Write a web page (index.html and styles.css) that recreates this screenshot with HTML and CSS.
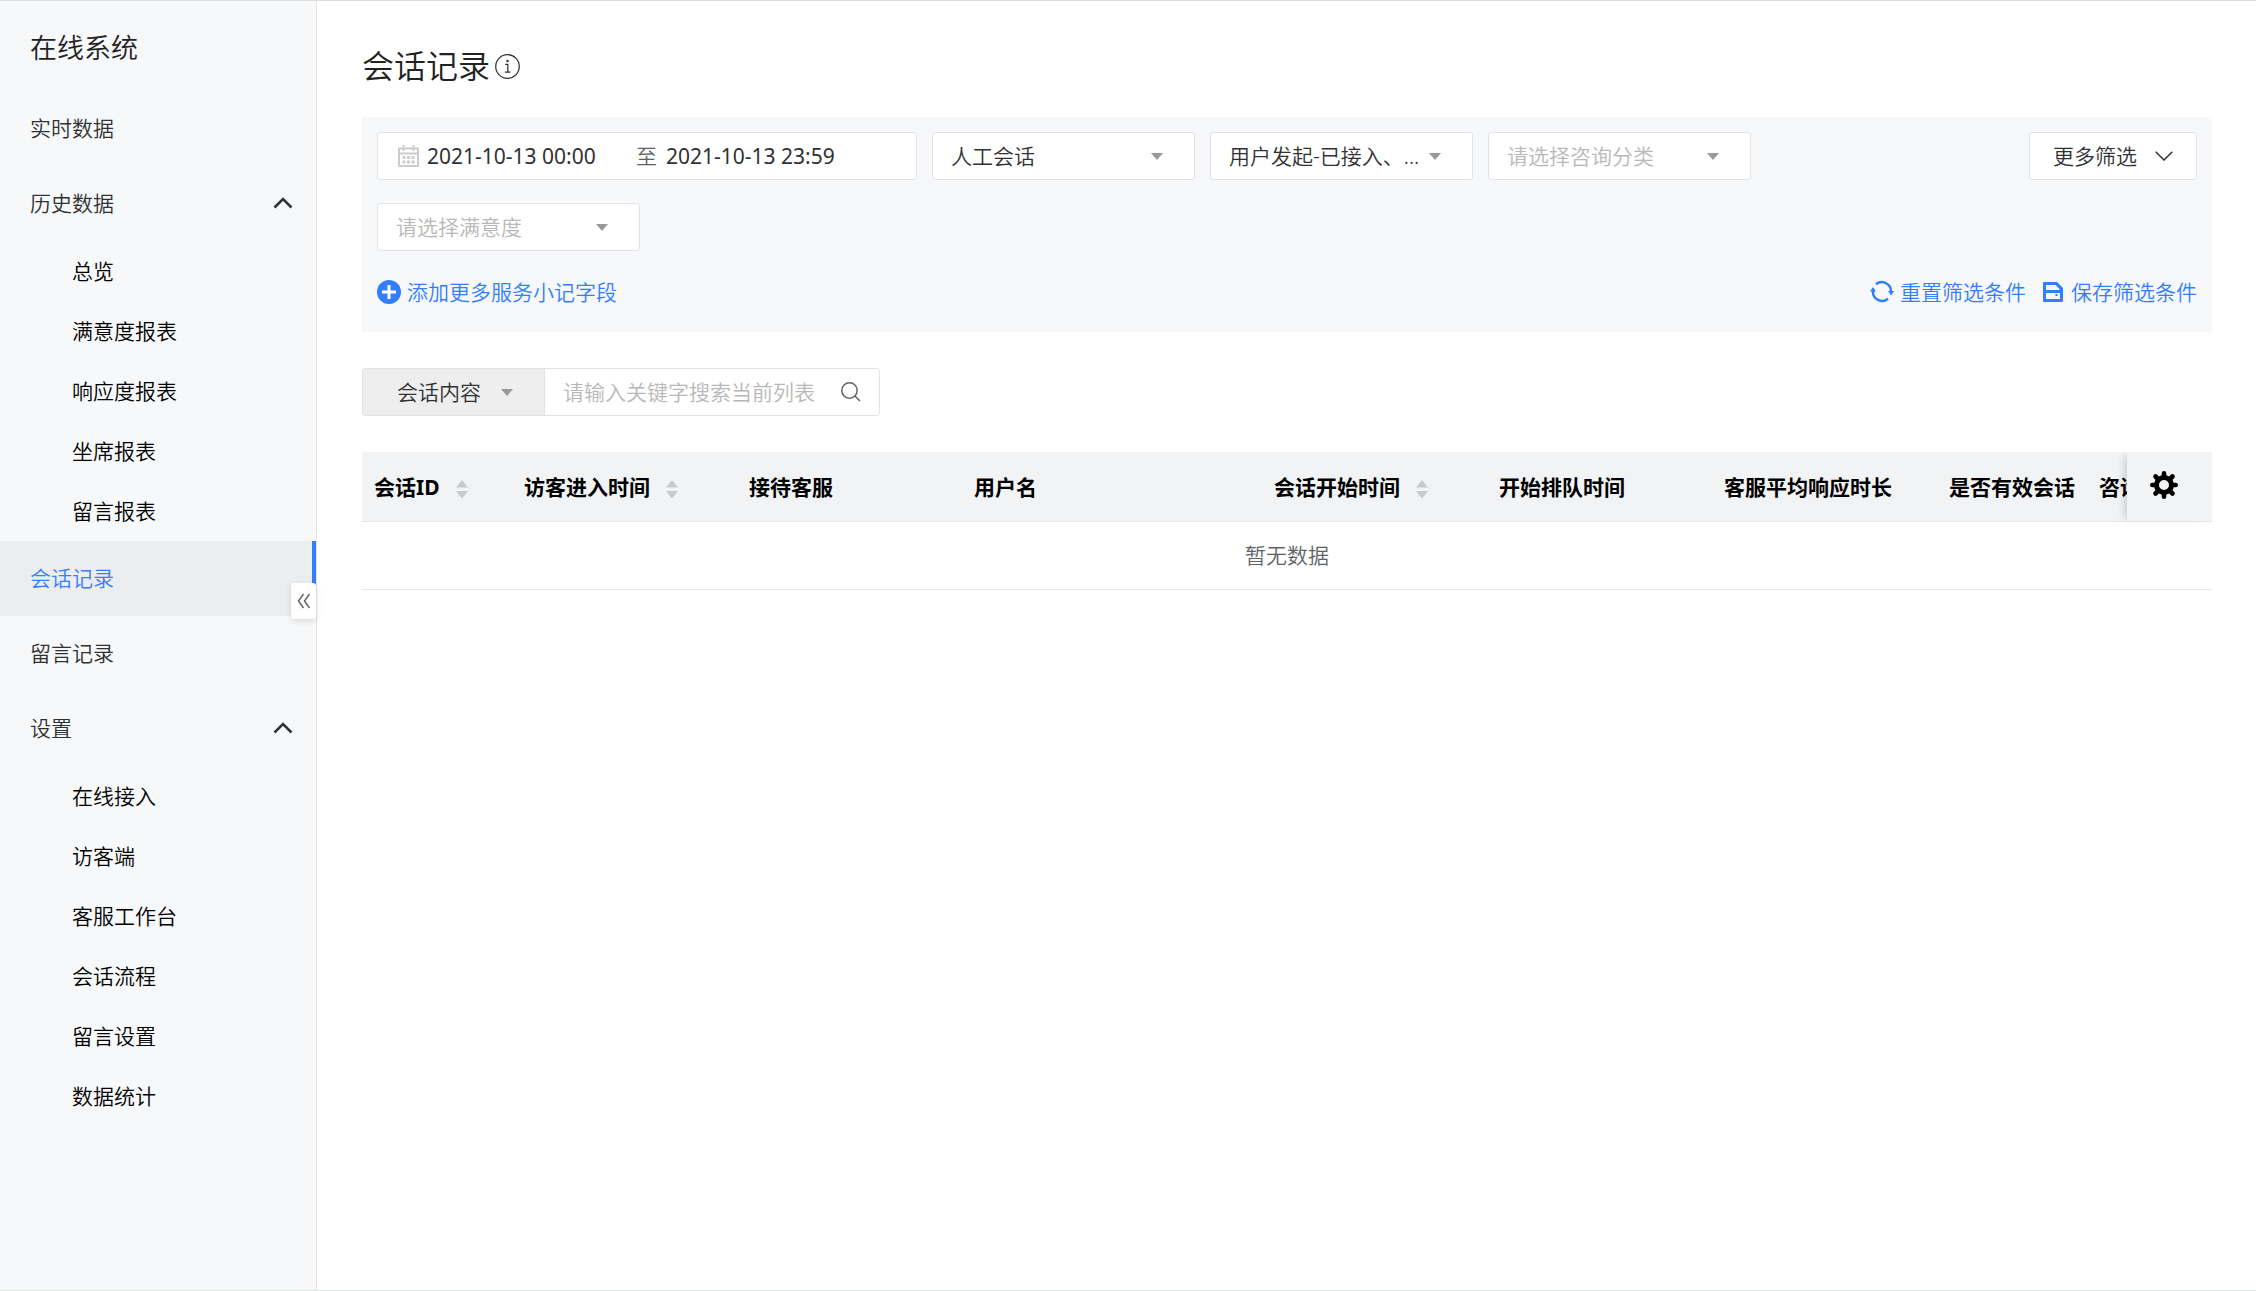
FILE: index.html
```html
<!DOCTYPE html>
<html lang="zh-CN">
<head>
<meta charset="utf-8">
<title>会话记录</title>
<link rel="stylesheet" href="styles.css">
</head>
<body>
<div class="app">
  <aside class="sidebar">
    <h2 class="brand">在线系统</h2>
    <nav>
      <a class="item" href="#">实时数据</a>
      <button class="item" type="button">历史数据
        <svg class="chevron" viewBox="0 0 20 12"><path d="M1.5 10.5 10 2l8.500 8.500"/></svg>
      </button>
      <a class="sub" href="#">总览</a>
      <a class="sub" href="#">满意度报表</a>
      <a class="sub" href="#">响应度报表</a>
      <a class="sub" href="#">坐席报表</a>
      <a class="sub" href="#">留言报表</a>
      <div class="current">
        <a class="item active" href="#">会话记录</a>
        <button class="collapse" type="button" aria-label="收起菜单">
          <svg viewBox="0 0 14 16"><path d="M6.500 1 1.500 8l5 7M12.500 1l-5 7 5 7"/></svg>
        </button>
      </div>
      <a class="item" href="#">留言记录</a>
      <button class="item" type="button">设置
        <svg class="chevron" viewBox="0 0 20 12"><path d="M1.500 10.500 10 2l8.500 8.500"/></svg>
      </button>
      <a class="sub" href="#">在线接入</a>
      <a class="sub" href="#">访客端</a>
      <a class="sub" href="#">客服工作台</a>
      <a class="sub" href="#">会话流程</a>
      <a class="sub" href="#">留言设置</a>
      <a class="sub" href="#">数据统计</a>
    </nav>
  </aside>

  <main class="main">
    <header class="page-head">
      <h1>会话记录</h1>
      <svg class="info" viewBox="0 0 24 24"><circle cx="12" cy="12" r="11.300"/><path d="M9.800 10h2.500v7M9.500 17.300h5.300"/><circle class="dot" cx="12" cy="6.700" r="1.200"/></svg>
    </header>

    <section class="filters">
      <div class="filter-row">
        <div class="fields">
          <div class="range">
            <svg class="calendar" viewBox="0 0 21 22"><path d="M1 3.500h19V21H1zM1 8.500h19M5.500 0v6M15.500 0v6"/><path class="days" d="M4.500 12.500h3M9 12.500h3M13.500 12.500h3M4.500 17h3M9 17h3M13.500 17h3"/></svg>
            <input type="text" aria-label="开始时间" value="2021-10-13 00:00">
            <span class="to">至</span>
            <input type="text" aria-label="结束时间" value="2021-10-13 23:59">
          </div>
          <div class="select"><select aria-label="会话类型"><option>人工会话</option></select></div>
          <div class="select"><select aria-label="会话状态"><option>用户发起-已接入、...</option></select></div>
          <div class="select"><select class="empty-value" aria-label="咨询分类"><option>请选择咨询分类</option></select></div>
          <div class="select"><select class="empty-value" aria-label="满意度"><option>请选择满意度</option></select></div>
        </div>
        <button class="more" type="button">更多筛选
          <svg viewBox="0 0 18 10"><path d="M.7.700 9 9l8.300-8.300"/></svg>
        </button>
      </div>
      <div class="links">
        <button class="link" type="button">
          <svg class="i24" viewBox="0 0 24 24"><circle cx="12" cy="12" r="12" fill="currentColor"/><path d="M12 5v14M5 12h14" stroke="#fff" stroke-width="3"/></svg>
          添加更多服务小记字段
        </button>
        <div class="link-group">
          <button class="link" type="button">
            <svg class="i24" viewBox="0 0 24 24" fill="none" stroke="currentColor" stroke-width="2.400"><path d="M6 4.200A9.200 9.200 0 0 1 21 11.500M18 18.800A9.200 9.200 0 0 1 3 11"/><path d="M18 11h6l-3 4.500zM0 11.500h6L3 7z" fill="currentColor" stroke="none"/></svg>
            重置筛选条件
          </button>
          <button class="link" type="button">
            <svg class="i20" viewBox="0 0 20 20"><path fill="currentColor" fill-rule="evenodd" d="M1 0h13l6 6v13a1 1 0 0 1-1 1H1a1 1 0 0 1-1-1V1a1 1 0 0 1 1-1zM3 3v5h13.500V7l-4-4zM3 11v6h14v-6zM12.500 12h2v2h-2z"/></svg>
            保存筛选条件
          </button>
        </div>
      </div>
    </section>

    <form class="search">
      <div class="select scope"><select aria-label="搜索范围"><option>会话内容</option></select></div>
      <input type="text" aria-label="关键字" placeholder="请输入关键字搜索当前列表">
      <button class="go" type="button" aria-label="搜索">
        <svg viewBox="0 0 20 20"><circle cx="8.500" cy="8.500" r="7.700"/><path d="m14 14 5 5"/></svg>
      </button>
    </form>

    <section class="table-wrap">
      <table>
        <colgroup><col class="c150"><col class="c225"><col class="c225"><col class="c300"><col class="c225"><col class="c225"><col class="c225"><col class="c150"><col class="c225"><col class="c85"></colgroup>
        <thead>
          <tr>
            <th>会话ID<svg class="sort" viewBox="0 0 12 18"><path d="M0 7.500 6 0l6 7.500zM0 11h12l-6 7.500z"/></svg></th>
            <th>访客进入时间<svg class="sort" viewBox="0 0 12 18"><path d="M0 7.500 6 0l6 7.500zM0 11h12l-6 7.500z"/></svg></th>
            <th>接待客服</th>
            <th>用户名</th>
            <th>会话开始时间<svg class="sort" viewBox="0 0 12 18"><path d="M0 7.500 6 0l6 7.500zM0 11h12l-6 7.500z"/></svg></th>
            <th>开始排队时间</th>
            <th>客服平均响应时长</th>
            <th>是否有效会话</th>
            <th>咨询分类</th>
            <th class="pinned">
              <button type="button" aria-label="列设置">
                <svg viewBox="-14 -14 28 28"><g stroke="currentColor" stroke-width="4.600" stroke-linecap="round"><path d="M0-11.700V-8M0 11.700V8M-11.700 0H-8M11.700 0H8M-8.500-8.500l3 3M8.500 8.500l-3-3M-8.500 8.500l3-3M8.500-8.500l-3 3"/></g><circle r="7.500" fill="none" stroke="currentColor" stroke-width="5"/></svg>
              </button>
            </th>
          </tr>
        </thead>
      </table>
      <p class="no-data">暂无数据</p>
    </section>
  </main>
</div>
</body>
</html>
```
FILE: styles.css
```css
* { box-sizing: border-box; }

body {
  margin: 0;
  background: #fff;
  color: #303133;
  font: 350 21px/30px "Noto Sans", "Noto Sans CJK SC", sans-serif;
}

button, input, select {
  margin: 0;
  padding: 0;
  border: 0;
  background: none;
  color: inherit;
  font: inherit;
}

a { color: inherit; text-decoration: none; }
h1, h2, p { margin: 0; }
svg { display: block; flex: none; }

.app {
  display: flex;
  min-height: 100vh;
  border-top: 1px solid #dcdcdc;
  border-bottom: 1px solid #d3e8e0;
}

/* Sidebar */
.sidebar {
  flex: none;
  width: 317px;
  border-right: 1px solid #e4e4e4;
  background: #f7f8fa;
}

.brand {
  padding: 27px 30px 23px;
  color: #222;
  font-size: 27px;
  font-weight: 350;
  line-height: 40px;
}

.item {
  display: flex;
  align-items: center;
  justify-content: space-between;
  width: 100%;
  height: 75px;
  padding: 0 23px 2px 30px;
}

.sub {
  display: flex;
  align-items: center;
  height: 60px;
  padding-left: 72px;
  color: #000;
}

.chevron {
  width: 20px;
  height: 12px;
  fill: none;
  stroke: #303133;
  stroke-width: 2.5;
}

.current { position: relative; }

.active {
  border-right: 4px solid #337eff;
  background: #ecedef;
  color: #337eff;
}

.collapse {
  position: absolute;
  right: 0;
  bottom: -3px;
  display: flex;
  align-items: center;
  justify-content: center;
  width: 25px;
  height: 36px;
  border-radius: 3px;
  background: #fff;
  box-shadow: 0 2px 6px rgba(0, 0, 0, .12);
}

.collapse svg {
  width: 14px;
  height: 16px;
  fill: none;
  stroke: #666;
  stroke-width: 1.5;
}

/* Page */
.main {
  flex: 1;
  min-width: 0;
  padding: 41px 44px 0 45px;
}

.page-head {
  display: flex;
  align-items: center;
  gap: 5px;
  height: 48px;
  margin-bottom: 27px;
}

h1 {
  color: #222;
  font-size: 32px;
  font-weight: 350;
  line-height: 48px;
}

.info {
  width: 25px;
  height: 25px;
  fill: none;
  stroke: #303133;
  stroke-width: 1.2;
}

.info .dot { fill: #303133; stroke: none; }

/* Filters */
.filters {
  padding: 15px 15px 25px;
  background: #f7f8fa;
}

.filter-row {
  display: flex;
  align-items: flex-start;
  justify-content: space-between;
  gap: 15px;
}

.fields {
  display: flex;
  flex-wrap: wrap;
  gap: 23px 15px;
  max-width: 1500px;
}

.range, .select, .more, .search {
  height: 48px;
  border: 1px solid #e1e3e9;
  border-radius: 3px;
  background: #fff;
}

.range {
  display: flex;
  align-items: center;
  width: 540px;
  padding-left: 20px;
}

.calendar {
  width: 21px;
  height: 22px;
  margin-right: 8px;
  fill: none;
  stroke: #ccc;
  stroke-width: 2;
}

.calendar .days { stroke-width: 3; }

.range input {
  width: 209px;
  font-weight: 400;
}

.to {
  width: 30px;
  color: #606266;
}

.select {
  position: relative;
  width: 263px;
}

.select select {
  width: 100%;
  height: 100%;
  padding: 0 48px 0 18px;
  appearance: none;
}

.select::after {
  content: "";
  position: absolute;
  top: 20px;
  right: 31px;
  border: 6px solid transparent;
  border-top: 7px solid #999;
  border-bottom: 0;
  pointer-events: none;
}

.select .empty-value { color: #b8b8b8; }

.more {
  display: flex;
  flex: none;
  align-items: center;
  gap: 18px;
  padding: 0 23px;
}

.more svg {
  width: 18px;
  height: 10px;
  fill: none;
  stroke: #303133;
  stroke-width: 1.5;
}

.links {
  display: flex;
  justify-content: space-between;
  margin-top: 26px;
}

.link-group { display: flex; gap: 17px; }

.link {
  display: flex;
  align-items: center;
  gap: 6px;
  color: #337eff;
}

.i24 { width: 24px; height: 24px; }
.i20 { width: 20px; height: 20px; margin-right: 2px; }

/* Search */
.search {
  display: flex;
  align-items: center;
  width: 518px;
  margin: 36px 0;
}

.search .scope {
  flex: none;
  width: 182px;
  height: 100%;
  border-width: 0 1px 0 0;
  border-radius: 2px 0 0 2px;
  background: #eee;
}

.search .scope select { padding: 0 40px 0 34px; }

.search input {
  flex: 1;
  min-width: 0;
  height: 100%;
  padding-left: 18px;
}

.search input::placeholder { color: #b8b8b8; }

.go { margin-right: 18px; }

.go svg {
  width: 20px;
  height: 20px;
  fill: none;
  stroke: #606266;
  stroke-width: 1.5;
}

/* Table */
.table-wrap { overflow: hidden; }

table {
  width: 2035px;
  table-layout: fixed;
  border-collapse: separate;
  border-spacing: 0;
}

.c85 { width: 85px; }
.c150 { width: 150px; }
.c225 { width: 225px; }
.c300 { width: 300px; }

th {
  height: 70px;
  padding: 0 0 0 12px;
  border-bottom: 1px solid #e6e6e6;
  background: #f1f3f5;
  color: #000;
  font-weight: 700;
  text-align: left;
  white-space: nowrap;
}

.sort {
  display: inline-block;
  width: 12px;
  height: 18px;
  margin-left: 16px;
  vertical-align: -3px;
  fill: #c8c9cc;
}

.pinned {
  position: sticky;
  right: 0;
  padding: 0 0 4px 23px;
  box-shadow: -6px 0 8px -4px rgba(0, 0, 0, .18);
}

.pinned button { display: block; }
.pinned svg { width: 28px; height: 28px; }

.no-data {
  height: 68px;
  border-bottom: 1px solid #e6e6e6;
  color: #606266;
  line-height: 67px;
  text-align: center;
}
```
